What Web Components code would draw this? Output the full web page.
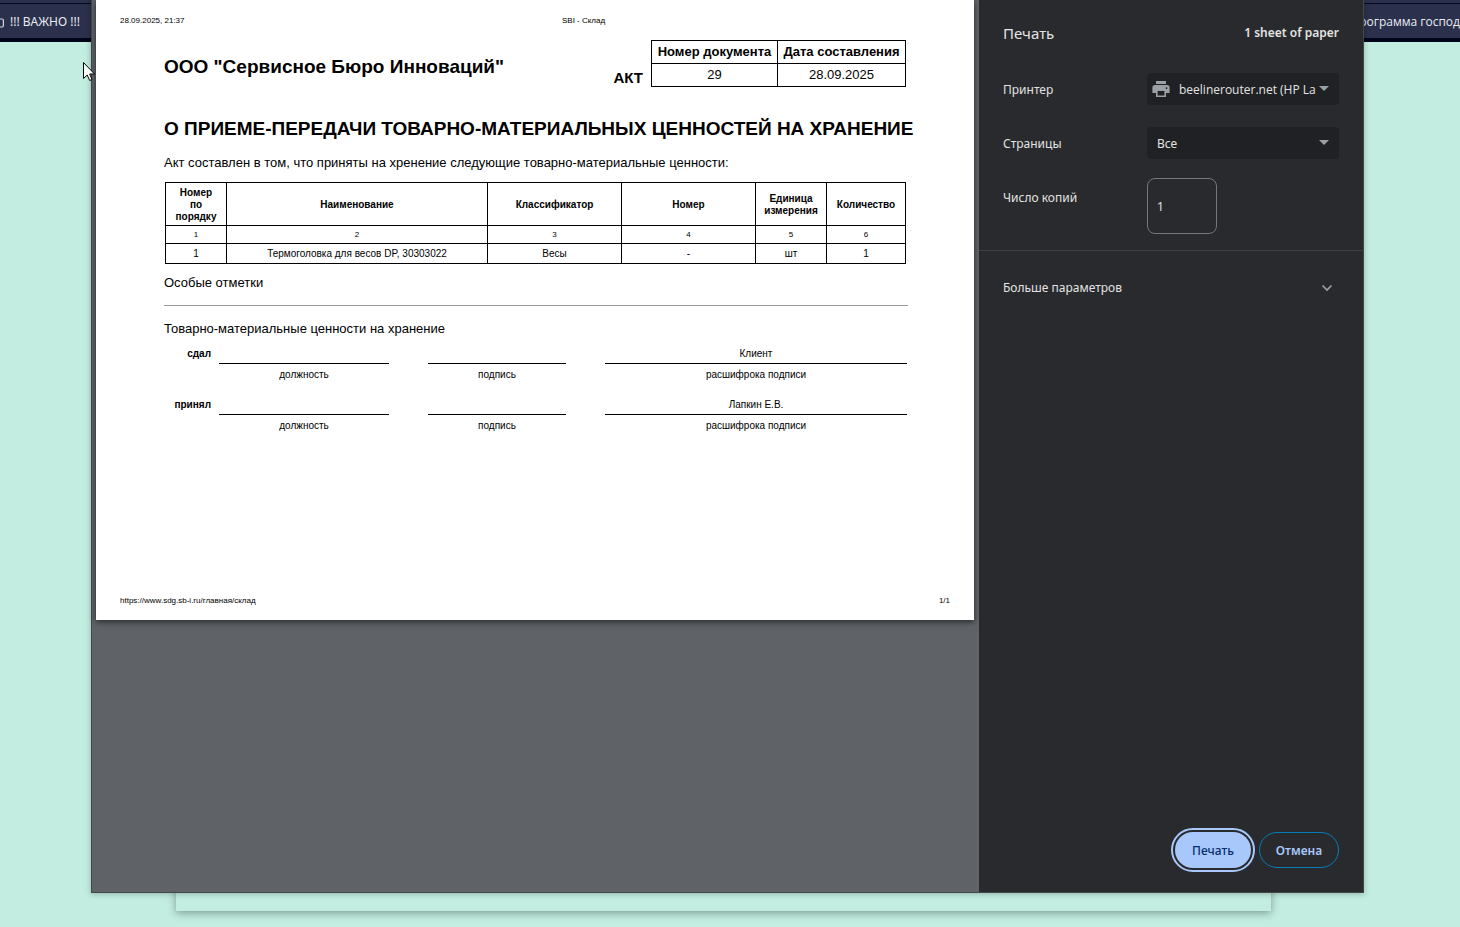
<!DOCTYPE html>
<html lang="ru">
<head>
<meta charset="utf-8">
<title>SBI - Склад</title>
<style>
html, body { margin: 0; height: 100%; }
body { background: #c2ede0; font-family: "Noto Sans", "Open Sans", sans-serif; font-size: 13px; overflow: hidden; }
</style>
</head>
<body>
<warehouse-page>
  <bookmark-bar></bookmark-bar>
</warehouse-page>
<print-dialog>
  <act-document slot="preview"></act-document>
  <print-settings slot="settings"></print-settings>
</print-dialog>
<mouse-pointer></mouse-pointer>
<script>
const define = (name, html, setup) => {
  const template = document.createElement('template');
  template.innerHTML = html;
  customElements.define(name, class extends HTMLElement {
    constructor() {
      super();
      this.attachShadow({ mode: 'open' }).append(template.content.cloneNode(true));
    }
    connectedCallback() { if (setup) setup(this, this.shadowRoot); }
  });
};

define('bookmark-bar', `
<style>
:host { display: flex; justify-content: space-between; align-items: center; box-sizing: border-box; height: 42px;
  border-bottom: 4px solid #00041a; background: linear-gradient(#2b314c 3px, #050a1e 3px 4px, #2b314c 4px); overflow: hidden; }
a { display: flex; align-items: center; gap: 6px; color: #e8eaf2; text-decoration: none; white-space: nowrap; font-size: 12px; line-height: 16px; padding-top: 6px; }
.first { margin-left: -10px; }
.last { font-family: "Open Sans", "Noto Sans", sans-serif; }
svg { width: 14px; height: 12px; }
</style>
<a class="first" href="#important"><svg viewBox="0 0 14 12" fill="none" stroke="#d5d8e4" stroke-width="1.2"><path d="M1 10V2.5Q1 1 2.500 1H5L6.500 3H12Q13.400 3 13.400 4.400V9.500Q13.400 11 12 11H2.500Q1 11 1 10Z"/></svg>!!! ВАЖНО !!!</a>
<a class="last" href="#program">Программа господ</a>`);

define('warehouse-page', `
<style>
:host { display: flex; flex-direction: column; height: 100vh; }
main { flex: 1; display: flex; padding: 0 189px 16px 176px; }
section { flex: 1; box-shadow: 0 2px 8px rgba(0, 0, 0, .35); }
</style>
<slot></slot>
<main><section></section></main>`);

define('print-dialog', `
<style>
:host { position: absolute; inset: 0 96px 34px 91px; display: flex; box-sizing: border-box; background: #292a2d;
  border: 1px solid #454746; border-top: 0; box-shadow: 0 1px 6px rgba(0, 0, 0, .25); }
.preview { flex: 1; min-width: 0; background: #5f6368; padding: 0 5px 0 4px; }
.settings { flex: 0 0 384px; display: flex; }
</style>
<div class="preview"><slot name="preview"></slot></div>
<div class="settings"><slot name="settings"></slot></div>`);

define('act-document', `
<style>
:host { display: flex; flex-direction: column; box-sizing: border-box; aspect-ratio: 878 / 620; background: #fff; color: #000;
  padding: 15px 24px 13px; font: 13px/16px "Liberation Sans", Arial, sans-serif; box-shadow: 0 2px 6px rgba(0, 0, 0, .6); }
header, footer { display: grid; font-size: 8px; line-height: 12px; }
header { grid-template-columns: 442fr 388fr; }
footer { grid-template-columns: 1fr auto; }
article { flex: 1; padding: 13px 43px 0 44px; }
.top { display: flex; align-items: flex-end; }
h1, h2 { margin: 0; font-size: 19px; line-height: 24px; white-space: nowrap; }
h1 { flex: 1; align-self: center; padding-top: 6px; }
h2 { margin-top: 30px; }
.top b { font-size: 15px; line-height: 18px; padding-right: 8px; }
table { border-collapse: collapse; table-layout: fixed; text-align: center; }
th, td { border: 1px solid #000; padding: 0; }
.number { width: 255px; margin-right: 1px; }
.number th, .number td { height: 22px; }
p { margin: 0; }
.intro { margin: 14px 0 11px; }
.goods { width: calc(100% - 2px); margin-left: 1px; font-size: 10px; line-height: 12px; }
.goods thead th { height: 40px; padding: 2px 4px 0; }
.goods thead th:first-child { padding: 2px 8px 0; }
.goods .index td { height: 17px; font-size: 8px; }
.goods .item td { height: 19px; }
.notes { margin: 11px 0 14px; }
hr { margin: 0 -1px 15px 0; border: 0; border-top: 1px solid #999; }
</style>
<header><span>28.09.2025, 21:37</span><span>SBI - Склад</span></header>
<article>
  <div class="top">
    <h1>ООО "Сервисное Бюро Инноваций"</h1>
    <b>АКТ</b>
    <table class="number">
      <colgroup><col style="width:126px"><col></colgroup>
      <tr><th>Номер документа</th><th>Дата составления</th></tr>
      <tr><td>29</td><td>28.09.2025</td></tr>
    </table>
  </div>
  <h2>О ПРИЕМЕ-ПЕРЕДАЧИ ТОВАРНО-МАТЕРИАЛЬНЫХ ЦЕННОСТЕЙ НА ХРАНЕНИЕ</h2>
  <p class="intro">Акт составлен в том, что приняты на хренение следующие товарно-материальные ценности:</p>
  <table class="goods">
    <colgroup><col style="width:61px"><col><col style="width:134px"><col style="width:134px"><col style="width:71px"><col style="width:79px"></colgroup>
    <thead><tr><th>Номер по порядку</th><th>Наименование</th><th>Классификатор</th><th>Номер</th><th>Единица измерения</th><th>Количество</th></tr></thead>
    <tbody>
      <tr class="index"><td>1</td><td>2</td><td>3</td><td>4</td><td>5</td><td>6</td></tr>
      <tr class="item"><td>1</td><td>Термоголовка для весов DP, 30303022</td><td>Весы</td><td>-</td><td>шт</td><td>1</td></tr>
    </tbody>
  </table>
  <p class="notes">Особые отметки</p>
  <hr>
  <p>Товарно-материальные ценности на хранение</p>
  <signature-row role-name="сдал" person="Клиент"></signature-row>
  <signature-row role-name="принял" person="Лапкин Е.В."></signature-row>
</article>
<footer><span>https://www.sdg.sb-i.ru/главная/склад</span><span>1/1</span></footer>`);

define('signature-row', `
<style>
:host { display: flex; gap: 8px; margin-top: 8px; font-size: 10px; line-height: 16px; height: 43px; }
b { width: 47px; text-align: right; padding-top: 1px; }
.fields { flex: 1; display: grid; grid-template-columns: 170fr 138fr 302fr; column-gap: 39px; text-align: center; }
.value { height: 17px; padding-top: 1px; border-bottom: 1px solid #000; }
.hint { padding-top: 3px; }
</style>
<b></b>
<div class="fields">
  <div><div class="value"></div><div class="hint">должность</div></div>
  <div><div class="value"></div><div class="hint">подпись</div></div>
  <div><div class="value" id="person"></div><div class="hint">расшифрока подписи</div></div>
</div>`, (host, root) => {
  root.querySelector('b').textContent = host.getAttribute('role-name');
  root.getElementById('person').textContent = host.getAttribute('person');
});

define('select-field', `
<style>
:host { display: flex; align-items: center; justify-content: space-between; height: 54px; }
label { padding-top: 2px; }
.box { position: relative; width: 192px; }
select { appearance: none; display: block; width: 100%; height: 32px; box-sizing: border-box; border: 0; border-radius: 4px; background: #202124;
  color: #e3e3e3; font: inherit; font-size: 12px; padding: 2px 32px 0 10px; }
svg { position: absolute; pointer-events: none; }
.arrow { right: 10px; top: 13px; width: 10px; height: 5px; }
.printer { display: none; left: 4px; top: 6px; width: 20px; height: 20px; }
:host([icon]) .printer { display: block; }
:host([icon]) select { padding-left: 32px; padding-right: 22px; text-overflow: clip; font-family: "Open Sans", "Noto Sans", sans-serif; }
</style>
<label for="control"></label>
<div class="box">
  <select id="control"><option></option></select>
  <svg class="printer" viewBox="0 0 20 20"><path fill="#9aa0a6" d="M5 2h10v3H5zM4 6h12a2.600 2.600 0 0 1 2.600 2.600V14H15v4H5v-4H1.400V8.600A2.600 2.600 0 0 1 4 6zM6.600 12v4.400h6.800V12zM15.500 8.200a.900.900 0 1 0 0 1.800.900.900 0 0 0 0-1.800z" fill-rule="evenodd"/></svg>
  <svg class="arrow" viewBox="0 0 10 5"><path fill="#9aa0a6" d="M0 0h10L5 5z"/></svg>
</div>`, (host, root) => {
  root.querySelector('label').textContent = host.getAttribute('label');
  root.querySelector('option').textContent = host.getAttribute('value');
});

define('copies-field', `
<style>
:host { display: flex; justify-content: space-between; padding-top: 8px; }
label { line-height: 18px; padding-top: 11px; }
.box { width: 192px; }
input { display: block; box-sizing: border-box; width: 70px; height: 56px; border: 1px solid #757775; border-radius: 8px; background: transparent;
  color: #e3e3e3; font: inherit; padding: 0 9px; }
</style>
<label for="copies">Число копий</label>
<div class="box"><input id="copies" type="text" inputmode="numeric" value="1"></div>`);

define('pill-button', `
<style>
:host { display: block; }
button { box-sizing: border-box; width: 80px; height: 36px; padding: 2px 0 0; border: 1px solid #047db7; border-radius: 18px; background: transparent;
  color: #a8c7fa; font: inherit; font-size: 12px; font-weight: 600; }
:host([primary]) button { width: 76px; border: 0; background: #a8c7fa; color: #062e6f; font-weight: 500; outline: 2px solid #a8c7fa; outline-offset: 2px; }
</style>
<button type="button"><slot></slot></button>`);

define('print-settings', `
<style>
:host { flex: 1; display: flex; flex-direction: column; color: #e3e3e3; font-size: 12px; line-height: 18px; }
header { display: flex; justify-content: space-between; align-items: center; height: 62px; padding: 4px 24px 0; box-sizing: border-box; }
h1 { margin: 0; font-size: 15px; line-height: 20px; font-weight: 400; }
header span { font-weight: 600; }
.fields { padding: 0 24px 16px; border-bottom: 1px solid #3f4042; }
.more { display: flex; justify-content: space-between; align-items: center; height: 74px; padding: 0 30px 0 24px; border: 0; background: none; color: inherit; font: inherit; }
.more svg { width: 12px; height: 8px; }
footer { display: flex; justify-content: flex-end; gap: 8px; margin-top: auto; padding: 24px; }
</style>
<header><h1>Печать</h1><span>1 sheet of paper</span></header>
<div class="fields">
  <select-field icon label="Принтер" value="beelinerouter.net (HP La"></select-field>
  <select-field label="Страницы" value="Все"></select-field>
  <copies-field></copies-field>
</div>
<button class="more" type="button" aria-expanded="false">Больше параметров<svg viewBox="0 0 12 8" fill="none" stroke="#9aa0a6" stroke-width="1.700"><path d="M1.500 1.500L6 6L10.500 1.500"/></svg></button>
<footer><pill-button primary>Печать</pill-button><pill-button>Отмена</pill-button></footer>`);

define('mouse-pointer', `
<style>
:host { position: absolute; left: 83px; top: 62px; pointer-events: none; }
svg { display: block; width: 12px; height: 19px; }
</style>
<svg viewBox="0 0 12 19"><path d="M.5.5V16.500L4.200 13L6.700 18.500L9 17.500L6.600 12H11.500Z" fill="#fff" stroke="#000"/></svg>`);
</script>
</body>
</html>
